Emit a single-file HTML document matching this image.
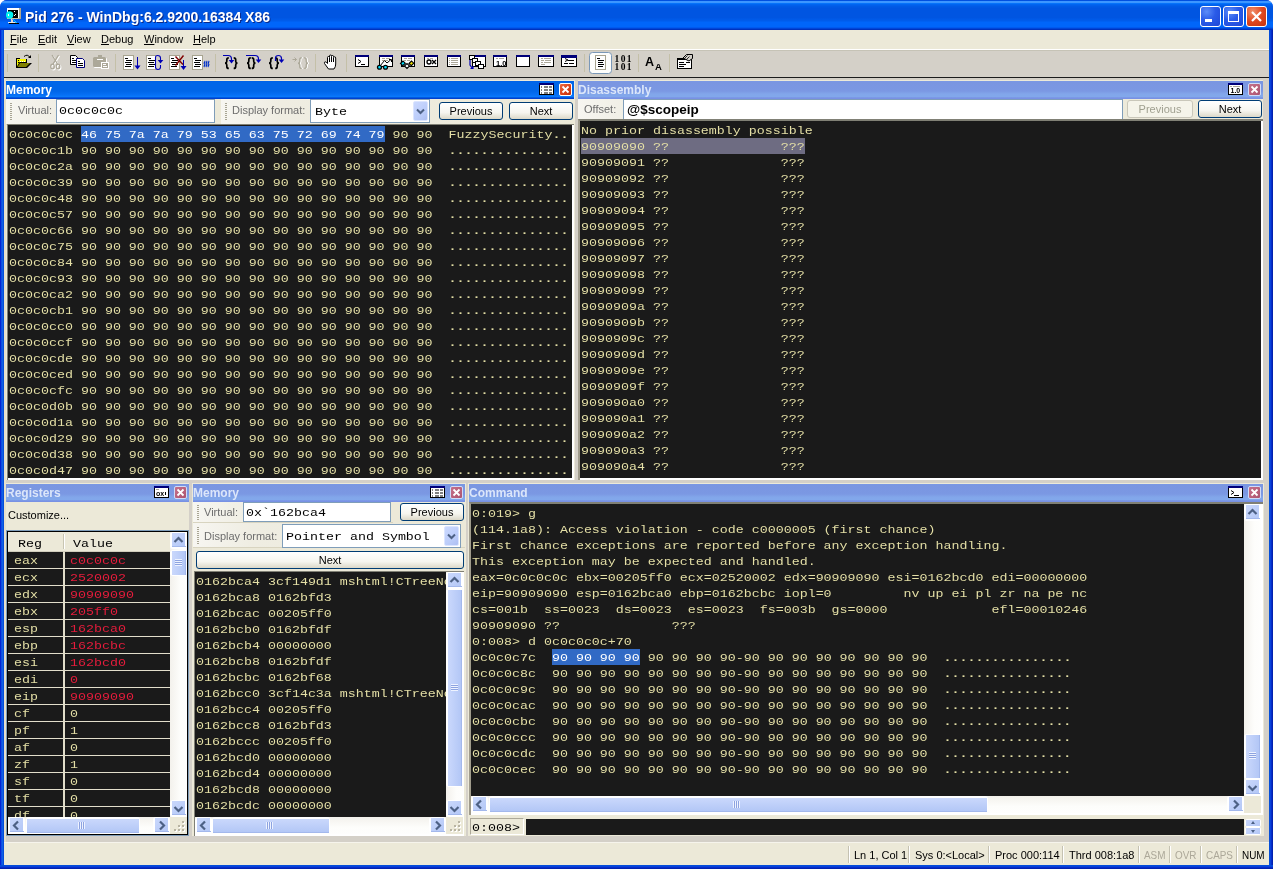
<!DOCTYPE html>
<html><head><meta charset="utf-8"><title>WinDbg</title><style>
html,body{margin:0;padding:0;background:#fff;}
body{width:1273px;height:869px;overflow:hidden;position:relative;font-family:"Liberation Sans",sans-serif;font-size:11px;color:#000;}
div,span,i{box-sizing:border-box;}
.abs{position:absolute;}
#win{position:absolute;left:0;top:0;width:1273px;height:869px;background:#0831d9;will-change:transform;border-radius:7px 7px 0 0;overflow:hidden;}
#bl{position:absolute;left:0;top:30px;width:4px;height:839px;background:linear-gradient(90deg,#0019cf 0,#0831d9 1px,#166aee 2px,#0855dd 3px,#0046d5 4px);}
#br{position:absolute;left:1269px;top:30px;width:4px;height:839px;background:linear-gradient(90deg,#0046d5 0,#0855dd 1px,#0831d9 2px,#001ea0 4px);}
#bb{position:absolute;left:0;top:865px;width:1273px;height:4px;background:linear-gradient(#0046d5 0,#0855dd 1px,#0831d9 2px,#001ea0 4px);}
#title{position:absolute;left:0;top:0;width:1273px;height:30px;background:linear-gradient(#0050e0 0,#0050e0 .6px,#3c96ff 1.4px,#3c96ff 2.6px,#0573fa 3.5px,#0064f0 4.5px,#005ae6 6.5px,#0055e1 8.5px,#0055e1 17.5px,#005ceb 20.5px,#0066fa 22.5px,#0066fa 26.5px,#005af0 27.5px,#0046d7 28.5px,#0032be 29.5px,#0032be 30px);}
#title .t{position:absolute;left:25px;top:9px;font-weight:bold;font-size:14px;line-height:16px;color:#fff;text-shadow:1px 1px 0 #0a2a8a;white-space:nowrap;}
.wb{position:absolute;top:6px;width:21px;height:21px;border:1px solid #fff;border-radius:3px;background:radial-gradient(circle at 30% 25%,#5c8df8 0,#2a5be8 45%,#1f47d6 100%);}
.wb.x{background:radial-gradient(circle at 30% 25%,#f0906c 0,#e0481f 50%,#c8320c 100%);}
#client{position:absolute;left:4px;top:30px;width:1265px;height:835px;background:#d4d0c8;}
#menu{position:absolute;left:0;top:0;width:1265px;height:19px;background:#ece9d8;}
#menu span{position:absolute;top:3px;font-size:11px;white-space:nowrap;}
#menu u{text-decoration:underline;}
#tb{position:absolute;left:0;top:19px;width:1265px;height:29px;background:#d4d0c8;border-top:1px solid #fff;border-bottom:1px solid #1c1c1c;box-shadow:inset 0 1px 0 #c6c3b6;}
.mono{font-family:"Liberation Mono",monospace;font-size:11.7px;line-height:16px;white-space:pre;color:#e4dfa6;}
.dark{position:absolute;background:#1a1a1a;overflow:hidden;}
.row{position:absolute;left:0;height:16px;transform:scaleX(1.1394);transform-origin:0 0;}
.sq{transform:scaleX(1.1394);transform-origin:0 0;}
.mono b{font-weight:bold;}
.mono b{font-weight:bold;}
.hl{position:absolute;height:16px;}
.ptitle{position:absolute;height:18px;color:#fff;font-weight:bold;font-size:12px;white-space:nowrap;}
.ptitle.act{background:linear-gradient(#0060e6 0,#0066e8 1.5px,#0066e8 10px,#0670f5 14px,#0a78fa 15.5px,#005ae0 16.5px,#0040d0 17.5px,#0040d0 18px);}
.ptitle.ina{background:linear-gradient(#7a98e4 0,#7a96e1 1.5px,#7b98e3 10px,#82a6ea 13px,#82a8eb 15.5px,#7891e4 17px,#7891e4 18px);color:#dbe6fa;}
.ptitle b{position:absolute;left:0px;top:2px;line-height:14px;}
.pclose{position:absolute;top:2px;width:13px;height:13px;border:1px solid #fff;border-radius:2px;background:linear-gradient(135deg,#ea6a42 0,#d8401a 60%,#c03410 100%);}
.ina .pclose{background:linear-gradient(135deg,#c4708a 0,#b8607a 60%,#aa5470 100%);border-color:#d0dcf8;}
.lbl{position:absolute;color:#6d6d6d;font-size:11px;white-space:nowrap;}
.inp{position:absolute;background:#fff;border:1px solid #7f9db9;}
.btn{position:absolute;border:1px solid #003c74;border-radius:3px;background:linear-gradient(#fff 0,#f6f5ef 60%,#dcd8c8 100%);text-align:center;font-size:11px;white-space:nowrap;}
.btn.dis{border-color:#c9c7ba;color:#a0a090;background:#f5f4ea;}
.bar{position:absolute;background:#ece9d8;}
.tbar{position:absolute;background:linear-gradient(90deg,#f7f6f1 0,#efede2 60px,#ece9d8 100%);border-bottom:1px solid #d8d4c0;}
.grip{position:absolute;width:2px;background:repeating-linear-gradient(#a8a594 0,#a8a594 1px,transparent 1px,transparent 2px);}
.cba{position:absolute;width:15px;background:linear-gradient(135deg,#cbd9ff 0,#bccdfa 60%,#aebff2 100%);border:1px solid #dbe5ff;border-radius:2px;}

.sbt.v{position:absolute;background:linear-gradient(90deg,#f3f1ec 0,#fdfdfb 60%,#fefefd 100%);}
.sbt.h{position:absolute;background:linear-gradient(#f3f1ec 0,#fdfdfb 60%,#fefefd 100%);}
.sbb,.sbth{position:absolute;border-radius:3px;background:linear-gradient(#a3b8ec,#a3b8ec) 2px calc(100% - 2px)/calc(100% - 3px) 1px no-repeat,linear-gradient(135deg,#cad8fc,#b3c7f6) 2px 1px/calc(100% - 4px) calc(100% - 3px) no-repeat,#fff;}
.sbth.vth{background:linear-gradient(#a3b8ec,#a3b8ec) calc(100% - 1px) 1px/1px calc(100% - 2px) no-repeat,linear-gradient(90deg,#cad8fc,#b3c7f6) 2px 1px/calc(100% - 4px) calc(100% - 2px) no-repeat,#fff;}
.sbth.hth{background:linear-gradient(#a3b8ec,#a3b8ec) 1px calc(100% - 1px)/calc(100% - 2px) 1px no-repeat,linear-gradient(#cad8fc,#b3c7f6) 1px 2px/calc(100% - 2px) calc(100% - 4px) no-repeat,#fff;}
.sbb.sm{background:linear-gradient(135deg,#cad8fc,#b3c7f6) 1px 1px/calc(100% - 2px) calc(100% - 2px) no-repeat,#fff;border-radius:2px;}
.gripv{position:absolute;left:5px;width:7px;height:7px;background:repeating-linear-gradient(#eef3ff 0,#eef3ff 1px,#8da3e0 1px,#8da3e0 2px);}
.griph{position:absolute;top:5px;width:7px;height:7px;background:repeating-linear-gradient(90deg,#eef3ff 0,#eef3ff 1px,#8da3e0 1px,#8da3e0 2px);}
.tri{position:absolute;left:6px;width:0;height:0;border-left:2.5px solid transparent;border-right:2.5px solid transparent;}
.tri.up{top:2px;border-bottom:3px solid #4d6185;}
.tri.dn{top:3px;border-top:3px solid #4d6185;}
</style></head><body>
<div id="win">
<div id="title"><div class="t">Pid 276 - WinDbg:6.2.9200.16384 X86</div>
<svg style="position:absolute;left:6px;top:8px" width="16" height="16" viewBox="0 0 16 16" shape-rendering="crispEdges"><rect x="1" y="0" width="12" height="11" fill="#fff"/><rect x="13" y="0" width="2" height="11" fill="#b0a890"/><rect x="1" y="10" width="12" height="1" fill="#c8c0a8"/><rect x="2" y="2" width="10" height="8" fill="#000"/><rect x="8" y="3" width="1" height="1" fill="#fff"/><rect x="9" y="6" width="1" height="1" fill="#fff"/><rect x="8" y="7" width="1" height="1" fill="#fff"/><rect x="5" y="11" width="2" height="3" fill="#d8d8d8"/><rect x="2" y="14" width="9" height="1" fill="#e8e8e8"/><rect x="3" y="15" width="10" height="1" fill="#000"/><path d="M6 11 L8 11 L12 15 L10 15 Z" fill="#0040ff" shape-rendering="auto"/><path d="M7 11.3 L11 15" stroke="#00e8ff" stroke-width="1" shape-rendering="auto"/><circle cx="3.6" cy="7" r="3.7" fill="#00f0f0" shape-rendering="auto"/><rect x="2" y="6" width="1" height="2" fill="#fff"/></svg>
<div class="wb" style="left:1200px"><i class="abs" style="left:4px;top:12px;width:7px;height:3px;background:#fff"></i></div>
<div class="wb" style="left:1223px"><i class="abs" style="left:4px;top:4px;width:11px;height:11px;border:1px solid #fff;border-top-width:3px"></i></div>
<div class="wb x" style="left:1246px"><svg class="abs" style="left:0;top:0" width="19" height="19"><path d="M5 5 L14 14 M14 5 L5 14" stroke="#fff" stroke-width="2.2"/></svg></div>
</div>
<div id="bl"></div><div id="br"></div><div id="bb"></div>
<div id="client">
<div id="menu">
<span style="left:6px"><u>F</u>ile</span>
<span style="left:34px"><u>E</u>dit</span>
<span style="left:63px"><u>V</u>iew</span>
<span style="left:97px"><u>D</u>ebug</span>
<span style="left:140px"><u>W</u>indow</span>
<span style="left:189px"><u>H</u>elp</span>
</div>
<div id="tb"></div>
<svg style="position:absolute;left:0;top:21px" width="1265" height="27" viewBox="4 51 1265 27"><rect x="7" y="54" width="1" height="18" fill="#c4c0a8" /><rect x="38" y="54" width="1" height="18" fill="#c4c0a8" /><rect x="115" y="54" width="1" height="18" fill="#c4c0a8" /><rect x="215" y="54" width="1" height="18" fill="#c4c0a8" /><rect x="315" y="54" width="1" height="18" fill="#c4c0a8" /><rect x="346" y="54" width="1" height="18" fill="#c4c0a8" /><rect x="584" y="54" width="1" height="18" fill="#c4c0a8" /><rect x="638" y="54" width="1" height="18" fill="#c4c0a8" /><rect x="669" y="54" width="1" height="18" fill="#c4c0a8" /><path d="M16 58 H20 V59 H27 V63 H32 L27 68 H16 Z" fill="#000" stroke="none" stroke-width="1" /><rect x="17" y="59" width="9" height="3" fill="#f8f800" /><path d="M17 62 V66.5 L19.5 62 Z" fill="#f8f800" stroke="none" stroke-width="1" /><rect x="18" y="60" width="1" height="1" fill="#000" /><rect x="18" y="62" width="1" height="1" fill="#000" /><rect x="20" y="61" width="1" height="1" fill="#fff" /><rect x="22" y="61" width="1" height="1" fill="#fff" /><rect x="24" y="61" width="1" height="1" fill="#fff" /><path d="M20 63 H30 L26 67 H17.5 Z" fill="#808000" stroke="none" stroke-width="1" /><path d="M24 56.5 Q27.5 53.5 30 57.5" fill="none" stroke="#000" stroke-width="1" /><path d="M28 58 H31 V55 Z" fill="#000" stroke="none" stroke-width="1" /><g transform="translate(1,1)" fill="none" stroke="#fff" stroke-width="1.2"><path d="M52 55 L57.5 64 M58.5 55 L53 64"/><ellipse cx="52.5" cy="66.5" rx="1.8" ry="2.3"/><ellipse cx="58" cy="66.5" rx="1.8" ry="2.3"/></g><g transform="translate(0,0)" fill="none" stroke="#aca899" stroke-width="1.2"><path d="M52 55 L57.5 64 M58.5 55 L53 64"/><ellipse cx="52.5" cy="66.5" rx="1.8" ry="2.3"/><ellipse cx="58" cy="66.5" rx="1.8" ry="2.3"/></g><path d="M70.5 55.5 H75.5 L77.5 57.5 V64.5 H70.5 Z" fill="#fff" stroke="#000" stroke-width="1" /><rect x="72" y="58" width="2" height="1" fill="#000" /><rect x="72" y="60" width="4" height="1" fill="#000" /><rect x="72" y="62" width="4" height="1" fill="#000" /><path d="M76.5 58.5 H82.5 L84.5 60.5 V67.5 H76.5 Z" fill="#fff" stroke="#00007b" stroke-width="1" /><rect x="78" y="61" width="2" height="1" fill="#000" /><rect x="78" y="63" width="5" height="1" fill="#000" /><rect x="78" y="65" width="5" height="1" fill="#000" /><rect x="94" y="58" width="13" height="10" fill="#fff" rx="1"/><rect x="93" y="57" width="13" height="10" fill="#aca899" rx="1.5"/><rect x="98" y="55" width="4" height="2" fill="#aca899" /><rect x="97" y="59" width="6" height="1" fill="#fff" /><rect x="101" y="62" width="8" height="7" fill="#fff" /><rect x="102" y="63" width="6" height="5" fill="#aca899" /><rect x="103" y="64" width="3" height="1" fill="#fff" /><rect x="103" y="66" width="4" height="1" fill="#fff" /><rect x="123" y="55" width="11" height="15" fill="#fff" /><rect x="123.5" y="55.5" width="10" height="14" fill="none" stroke="#a8a490"/><rect x="125" y="58" width="3" height="1" fill="#000" /><rect x="126" y="60" width="6" height="1" fill="#000" /><rect x="125" y="62" width="6" height="1" fill="#000" /><rect x="126" y="64" width="6" height="1" fill="#000" /><rect x="125" y="66" width="6" height="1" fill="#000" /><rect x="137" y="57" width="1" height="11" fill="#0000b4" /><path d="M134.5 65.5 H140.5 L137.5 69.5 Z" fill="#0000b4" stroke="none" stroke-width="1" /><rect x="146" y="55" width="11" height="15" fill="#fff" /><rect x="146.5" y="55.5" width="10" height="14" fill="none" stroke="#a8a490"/><rect x="148" y="58" width="3" height="1" fill="#000" /><rect x="149" y="60" width="6" height="1" fill="#000" /><rect x="148" y="62" width="6" height="1" fill="#000" /><rect x="149" y="64" width="6" height="1" fill="#000" /><rect x="148" y="66" width="6" height="1" fill="#000" /><rect x="156" y="55" width="2" height="15" fill="#d4d0c8" /><path d="M155.5 57.5 Q155.5 55.5 157.5 55.5 Q160.5 55.5 160.5 58 V60 M155.5 57.5 V67 Q155.5 69.5 158 69.5 Q160.5 69.5 160.5 67 V65" fill="none" stroke="#0000b4" stroke-width="1.1" /><path d="M157.7 60 H163.3 L160.5 63.5 Z" fill="#0000b4" stroke="none" stroke-width="1" /><rect x="169" y="55" width="11" height="15" fill="#fff" /><rect x="169.5" y="55.5" width="10" height="14" fill="none" stroke="#a8a490"/><rect x="171" y="58" width="3" height="1" fill="#000" /><rect x="172" y="60" width="6" height="1" fill="#000" /><rect x="171" y="62" width="6" height="1" fill="#000" /><rect x="172" y="64" width="6" height="1" fill="#000" /><rect x="171" y="66" width="6" height="1" fill="#000" /><rect x="183" y="60" width="1" height="8" fill="#0000b4" /><path d="M180.5 66 H186.5 L183.5 70 Z" fill="#0000b4" stroke="none" stroke-width="1" /><path d="M175.5 56.5 L183 64.5 M183.5 55.5 L175.5 65.5" fill="none" stroke="#800000" stroke-width="1.4" /><rect x="192" y="55" width="11" height="15" fill="#fff" /><rect x="192.5" y="55.5" width="10" height="14" fill="none" stroke="#a8a490"/><rect x="194" y="58" width="3" height="1" fill="#000" /><rect x="195" y="60" width="6" height="1" fill="#000" /><rect x="194" y="62" width="6" height="1" fill="#000" /><rect x="195" y="64" width="6" height="1" fill="#000" /><rect x="194" y="66" width="6" height="1" fill="#000" /><path d="M204.5 61 q.8 .75 0 1.5 q-.8 .75 0 1.5 q.8 .75 0 1.5 q-.8 .75 0 1.5" fill="none" stroke="#0030c8" stroke-width="1.1" /><path d="M206.5 61 q.8 .75 0 1.5 q-.8 .75 0 1.5 q.8 .75 0 1.5 q-.8 .75 0 1.5" fill="none" stroke="#0030c8" stroke-width="1.1" /><path d="M208.5 61 q.8 .75 0 1.5 q-.8 .75 0 1.5 q.8 .75 0 1.5 q-.8 .75 0 1.5" fill="none" stroke="#0030c8" stroke-width="1.1" /><path d="M228.8 57.8 Q226.8 57.8 226.8 59.8 V61.2 Q226.8 63 225.1 63.2 Q226.8 63.4 226.8 65 V66.4 Q226.8 68.4 228.8 68.4" fill="none" stroke="#000" stroke-width="1.7" /><path d="M233.7 57.8 Q235.7 57.8 235.7 59.8 V61.2 Q235.7 63 237.4 63.2 Q235.7 63.4 235.7 65 V66.4 Q235.7 68.4 233.7 68.4" fill="none" stroke="#000" stroke-width="1.7" /><path d="M223 55.5 H228 Q231.5 55.5 231.5 59 V61" fill="none" stroke="#0000b4" stroke-width="1.2" /><path d="M228.7 60 H234.3 L231.5 63.5 Z" fill="#0000b4" stroke="none" stroke-width="1" /><path d="M250.8 57.8 Q248.8 57.8 248.8 59.8 V61.2 Q248.8 63 247.1 63.2 Q248.8 63.4 248.8 65 V66.4 Q248.8 68.4 250.8 68.4" fill="none" stroke="#000" stroke-width="1.7" /><path d="M251.7 57.8 Q253.7 57.8 253.7 59.8 V61.2 Q253.7 63 255.4 63.2 Q253.7 63.4 253.7 65 V66.4 Q253.7 68.4 251.7 68.4" fill="none" stroke="#000" stroke-width="1.7" /><path d="M246 55.5 H255 Q258.5 55.5 258.5 59 V60" fill="none" stroke="#0000b4" stroke-width="1.2" /><path d="M255.7 59.5 H261.3 L258.5 63 Z" fill="#0000b4" stroke="none" stroke-width="1" /><path d="M272.8 57.8 Q270.8 57.8 270.8 59.8 V61.2 Q270.8 63 269.1 63.2 Q270.8 63.4 270.8 65 V66.4 Q270.8 68.4 272.8 68.4" fill="none" stroke="#000" stroke-width="1.7" /><path d="M275.2 57.8 Q277.2 57.8 277.2 59.8 V61.2 Q277.2 63 278.9 63.2 Q277.2 63.4 277.2 65 V66.4 Q277.2 68.4 275.2 68.4" fill="none" stroke="#000" stroke-width="1.7" /><path d="M275.5 61 V58 Q275.5 55.5 278.5 55.5 Q281.5 55.5 281.5 58.5 V60" fill="none" stroke="#0000b4" stroke-width="1.2" /><path d="M278.7 59.5 H284.3 L281.5 63 Z" fill="#0000b4" stroke="none" stroke-width="1" /><path d="M302.8 57.8 Q300.8 57.8 300.8 59.8 V61.2 Q300.8 63 299.1 63.2 Q300.8 63.4 300.8 65 V66.4 Q300.8 68.4 302.8 68.4" fill="none" stroke="#fff" stroke-width="1.4" /><path d="M305.2 57.8 Q307.2 57.8 307.2 59.8 V61.2 Q307.2 63 308.9 63.2 Q307.2 63.4 307.2 65 V66.4 Q307.2 68.4 305.2 68.4" fill="none" stroke="#fff" stroke-width="1.4" /><path d="M301.8 57.8 Q299.8 57.8 299.8 59.8 V61.2 Q299.8 63 298.1 63.2 Q299.8 63.4 299.8 65 V66.4 Q299.8 68.4 301.8 68.4" fill="none" stroke="#aca899" stroke-width="1.4" /><path d="M304.2 57.8 Q306.2 57.8 306.2 59.8 V61.2 Q306.2 63 307.9 63.2 Q306.2 63.4 306.2 65 V66.4 Q306.2 68.4 304.2 68.4" fill="none" stroke="#aca899" stroke-width="1.4" /><path d="M292.5 59.5 H296.5 M294.5 57.5 L296.5 59.5 L294.5 61.5" fill="none" stroke="#aca899" stroke-width="1" /><path d="M327.5 62 V57.5 Q327.5 56.5 328.5 56.5 Q329.5 56.5 329.5 57.5 V56 Q329.5 55 330.5 55 Q331.5 55 331.5 56 V56.5 Q331.5 55.5 332.5 55.5 Q333.5 55.5 333.5 56.5 V57.5 Q333.5 56.8 334.5 56.8 Q335.7 56.8 335.7 58 V64 Q335.7 67 334 69 H328.5 L324.5 63.5 Q324 62 325.2 61.8 Q326.3 61.8 327.5 63.5 Z" fill="#fff" stroke="#000" stroke-width="1" /><line x1="329.5" y1="58" x2="329.5" y2="62" stroke="#000" stroke-width="1"/><line x1="331.5" y1="57" x2="331.5" y2="62" stroke="#000" stroke-width="1"/><line x1="333.5" y1="58" x2="333.5" y2="62" stroke="#000" stroke-width="1"/><rect x="355" y="55" width="14" height="12" fill="#000" /><rect x="356" y="57" width="12" height="9" fill="#fff" /><rect x="355" y="55" width="14" height="2" fill="#00007b" /><path d="M358 59.5 L361 61.5 L358 63.5" fill="none" stroke="#000" stroke-width="1" /><rect x="361" y="64" width="4" height="1" fill="#000" /><rect x="379" y="55" width="14" height="12" fill="#000" /><rect x="380" y="57" width="12" height="9" fill="#fff" /><rect x="379" y="55" width="14" height="2" fill="#00007b" /><rect x="382" y="58" width="3" height="1" fill="#aca899" /><rect x="386" y="58" width="4" height="1" fill="#aca899" /><rect x="382" y="60" width="2" height="1" fill="#aca899" /><rect x="385" y="60" width="3" height="1" fill="#aca899" /><path d="M380 66 L384.5 60.5 L387 63 L391 59.5 M389 59.5 H391.5 V62" fill="none" stroke="#000" stroke-width="1" /><ellipse cx="379.5" cy="67.3" rx="2" ry="1.9" fill="#00e0ff" stroke="#000" stroke-width="1.3"/><ellipse cx="385.5" cy="67.3" rx="2" ry="1.9" fill="#00e0ff" stroke="#000" stroke-width="1.3"/><rect x="381" y="66" width="3" height="1" fill="#000" /><rect x="401" y="55" width="14" height="12" fill="#000" /><rect x="402" y="57" width="12" height="9" fill="#fff" /><rect x="401" y="55" width="14" height="2" fill="#00007b" /><rect x="404" y="58" width="3" height="1" fill="#aca899" /><rect x="408" y="58" width="4" height="1" fill="#aca899" /><rect x="404" y="60" width="2" height="1" fill="#aca899" /><rect x="407" y="60" width="3" height="1" fill="#aca899" /><path d="M400.5 63.5 L403 61 L405.3 63.2 L402.8 65.7 Z" fill="#00e0ff" stroke="#000" stroke-width="1.1" /><path d="M404.5 66 L407 63.5 L409.5 66 L407 68.5 Z" fill="#fff" stroke="#000" stroke-width="1.1" /><path d="M409 63.5 L411.5 61 L413.8 63.2 L411.3 65.7 Z" fill="#f0e000" stroke="#000" stroke-width="1.1" /><rect x="424" y="55" width="14" height="12" fill="#000" /><rect x="425" y="57" width="12" height="9" fill="#fff" /><rect x="424" y="55" width="14" height="2" fill="#00007b" /><ellipse cx="429" cy="62" rx="2" ry="2" fill="none" stroke="#000" stroke-width="1.3"/><path d="M432 60 L436 64 M436 60 L432 64" fill="none" stroke="#000" stroke-width="1.3" /><rect x="427" y="58" width="2" height="1" fill="#aca899" /><rect x="430" y="58" width="3" height="1" fill="#aca899" /><rect x="447" y="55" width="14" height="12" fill="#000" /><rect x="448" y="57" width="12" height="9" fill="#fff" /><rect x="447" y="55" width="14" height="2" fill="#00007b" /><rect x="449" y="58" width="1" height="1" fill="#aca899" /><rect x="451" y="58" width="7" height="1" fill="#aca899" /><rect x="449" y="60" width="1" height="1" fill="#aca899" /><rect x="451" y="60" width="7" height="1" fill="#aca899" /><rect x="449" y="62" width="1" height="1" fill="#aca899" /><rect x="451" y="62" width="7" height="1" fill="#aca899" /><rect x="449" y="64" width="1" height="1" fill="#aca899" /><rect x="451" y="64" width="7" height="1" fill="#aca899" /><rect x="472" y="55" width="14" height="12" fill="#000" /><rect x="473" y="57" width="12" height="9" fill="#fff" /><rect x="472" y="55" width="14" height="2" fill="#00007b" /><path d="M470 57 V65 L472.5 68.5 M470.5 68.5 H473 V66" fill="none" stroke="#0000b4" stroke-width="1.2" /><rect x="469" y="55" width="6" height="5" fill="#000" /><rect x="470" y="56" width="4" height="3" fill="#fff" /><rect x="472" y="58" width="6" height="5" fill="#000" /><rect x="473" y="59" width="4" height="3" fill="#fff" /><rect x="475" y="61" width="6" height="5" fill="#000" /><rect x="476" y="62" width="4" height="3" fill="#fff" /><rect x="478" y="64" width="6" height="5" fill="#000" /><rect x="479" y="65" width="4" height="3" fill="#fff" /><rect x="493" y="55" width="14" height="12" fill="#000" /><rect x="494" y="57" width="12" height="9" fill="#fff" /><rect x="493" y="55" width="14" height="2" fill="#00007b" /><rect x="496" y="58" width="2" height="1" fill="#aca899" /><rect x="499" y="58" width="5" height="1" fill="#aca899" /><text x="496" y="65.5" font-family="Liberation Sans" font-weight="bold" font-size="7.5" fill="#000">1.0</text><rect x="516" y="55" width="14" height="12" fill="#000" /><rect x="517" y="57" width="12" height="9" fill="#fff" /><rect x="516" y="55" width="14" height="2" fill="#00007b" /><rect x="538" y="55" width="16" height="12" fill="#000" /><rect x="539" y="57" width="14" height="9" fill="#fff" /><rect x="538" y="55" width="16" height="2" fill="#00007b" /><rect x="541" y="58" width="2" height="1" fill="#aca899" /><rect x="544" y="58" width="7" height="1" fill="#aca899" /><rect x="541" y="60" width="3" height="1" fill="#aca899" /><rect x="545" y="60" width="6" height="1" fill="#aca899" /><rect x="541" y="62" width="2" height="1" fill="#aca899" /><rect x="544" y="62" width="7" height="1" fill="#aca899" /><rect x="541" y="64" width="4" height="1" fill="#aca899" /><rect x="561" y="55" width="16" height="12" fill="#000" /><rect x="562" y="57" width="14" height="9" fill="#fff" /><rect x="561" y="55" width="16" height="2" fill="#00007b" /><path d="M565 58.5 L568 60 L565 61.5" fill="none" stroke="#000" stroke-width="1" /><rect x="568" y="60" width="6" height="1" fill="#000" /><rect x="564" y="63" width="4" height="1" fill="#000" /><rect x="569" y="63" width="5" height="1" fill="#000" /><rect x="561" y="55" width="16" height="3" fill="#00007b" /><rect x="589.5" y="52.5" width="22" height="21" fill="#fdfdfb" rx="3" stroke="#7a98b8"/><rect x="595" y="55" width="11" height="15" fill="#fff" /><rect x="595.5" y="55.5" width="10" height="14" fill="none" stroke="#a8a490"/><rect x="597" y="58" width="3" height="1" fill="#000" /><rect x="598" y="60" width="6" height="1" fill="#000" /><rect x="598" y="62" width="5" height="1" fill="#000" /><rect x="598" y="64" width="6" height="1" fill="#000" /><rect x="598" y="66" width="5" height="1" fill="#000" /><text x="614.5" y="61.5" font-family="Liberation Serif" font-weight="bold" font-size="9.5" fill="#000" textLength="17" lengthAdjust="spacing">101</text><text x="614.5" y="69.5" font-family="Liberation Serif" font-weight="bold" font-size="9.5" fill="#000" textLength="17" lengthAdjust="spacing">101</text><text x="645" y="66" font-family="Liberation Sans" font-weight="bold" font-size="12.5" fill="#000">A</text><text x="655" y="69.5" font-family="Liberation Sans" font-weight="bold" font-size="9.5" fill="#000">A</text><rect x="677" y="58" width="15" height="11" fill="#000" /><rect x="678" y="60" width="13" height="8" fill="#fff" /><rect x="679" y="62" width="5" height="1" fill="#000" /><rect x="679" y="64" width="7" height="1" fill="#000" /><rect x="679" y="66" width="5" height="1" fill="#000" /><rect x="686" y="62" width="4" height="1" fill="#000" /><path d="M683 58 L686.5 54.5 H692.5 V58.5 L689 61 Z" fill="#d4d0c8" stroke="#000" stroke-width="1" /><path d="M684.5 58.5 L687.5 55.5 M686.5 59.5 L689.5 56.5" fill="none" stroke="#000" stroke-width="0.8" /></svg>
<div class="abs" style="left:0px;top:48px;width:2px;height:764px;background:#e6dfcc"></div>
<div class="abs" style="left:2px;top:50px;width:569px;height:400px;background:#ece9d8"></div>
<div class="ptitle act" style="left:2px;top:51px;width:568px;"><b>Memory</b><div class="pclose" style="left:553px"><svg class="abs" style="left:0;top:0" width="11" height="11"><path d="M2.5 2.5 L8.5 8.5 M8.5 2.5 L2.5 8.5" stroke="#fff" stroke-width="1.8"/></svg></div><svg class="abs" style="left:533px;top:2px" width="15" height="12" viewBox="0 0 15 12" shape-rendering="crispEdges"><rect width="15" height="12" fill="#000"/><rect x="1" y="2" width="13" height="9" fill="#fff"/><rect width="15" height="2" fill="#00007b"/><rect x="2" y="3" width="1" height="2" fill="#808080"/><rect x="5" y="3" width="4" height="2" fill="#808080"/><rect x="10" y="3" width="3" height="2" fill="#808080"/><rect x="2" y="6" width="1" height="2" fill="#808080"/><rect x="5" y="6" width="4" height="2" fill="#808080"/><rect x="10" y="6" width="3" height="2" fill="#808080"/><rect x="2" y="9" width="1" height="2" fill="#808080"/><rect x="5" y="9" width="4" height="2" fill="#808080"/><rect x="10" y="9" width="3" height="2" fill="#808080"/></svg></div>
<div class="tbar" style="left:2px;top:69px;width:214px;height:26px;"></div>
<div class="tbar" style="left:217px;top:69px;width:352px;height:26px;"></div>
<div class="grip" style="left:6px;top:73px;height:17px"></div>
<div class="grip" style="left:221px;top:73px;height:17px"></div>
<div class="lbl" style="left:14px;top:74px;">Virtual:</div>
<div class="inp" style="left:52px;top:69px;width:159px;height:24px;"><span class="mono sq" style="color:#000;position:absolute;left:2px;top:3px;">0c0c0c0c</span></div>
<div class="lbl" style="left:228px;top:74px;">Display format:</div>
<div class="inp" style="left:306px;top:69px;width:120px;height:24px;"><span class="mono sq" style="color:#000;position:absolute;left:4px;top:4px;">Byte</span></div>
<div class="cba" style="left:409px;top:71px;height:20px"><svg class="abs" style="left:2px;top:6px" width="9" height="7"><path d="M1 1.5 L4.5 5 L8 1.5" fill="none" stroke="#4d6185" stroke-width="2"/></svg></div>
<div class="btn" style="left:435px;top:72px;width:64px;height:18px;line-height:16px;">Previous</div>
<div class="btn" style="left:505px;top:72px;width:64px;height:18px;line-height:16px;">Next</div>
<div class="abs" style="left:3px;top:94px;width:567px;height:356px;background:#fff;border-left:1px solid #808075;border-top:1px solid #808075"></div>
<div class="dark" style="left:4px;top:95px;width:564px;height:353px;">
<div class="hl" style="left:73px;top:1px;width:304px;background:#316ac5"></div>
<div class="row mono" style="left:1px;top:2px;">0c0c0c0c <span style="color:#fff">46 75 7a 7a 79 53 65 63 75 72 69 74 79</span> 90 90  FuzzySecurity<b>..</b></div>
<div class="row mono" style="left:1px;top:18px;">0c0c0c1b 90 90 90 90 90 90 90 90 90 90 90 90 90 90 90  <b>...............</b></div>
<div class="row mono" style="left:1px;top:34px;">0c0c0c2a 90 90 90 90 90 90 90 90 90 90 90 90 90 90 90  <b>...............</b></div>
<div class="row mono" style="left:1px;top:50px;">0c0c0c39 90 90 90 90 90 90 90 90 90 90 90 90 90 90 90  <b>...............</b></div>
<div class="row mono" style="left:1px;top:66px;">0c0c0c48 90 90 90 90 90 90 90 90 90 90 90 90 90 90 90  <b>...............</b></div>
<div class="row mono" style="left:1px;top:82px;">0c0c0c57 90 90 90 90 90 90 90 90 90 90 90 90 90 90 90  <b>...............</b></div>
<div class="row mono" style="left:1px;top:98px;">0c0c0c66 90 90 90 90 90 90 90 90 90 90 90 90 90 90 90  <b>...............</b></div>
<div class="row mono" style="left:1px;top:114px;">0c0c0c75 90 90 90 90 90 90 90 90 90 90 90 90 90 90 90  <b>...............</b></div>
<div class="row mono" style="left:1px;top:130px;">0c0c0c84 90 90 90 90 90 90 90 90 90 90 90 90 90 90 90  <b>...............</b></div>
<div class="row mono" style="left:1px;top:146px;">0c0c0c93 90 90 90 90 90 90 90 90 90 90 90 90 90 90 90  <b>...............</b></div>
<div class="row mono" style="left:1px;top:162px;">0c0c0ca2 90 90 90 90 90 90 90 90 90 90 90 90 90 90 90  <b>...............</b></div>
<div class="row mono" style="left:1px;top:178px;">0c0c0cb1 90 90 90 90 90 90 90 90 90 90 90 90 90 90 90  <b>...............</b></div>
<div class="row mono" style="left:1px;top:194px;">0c0c0cc0 90 90 90 90 90 90 90 90 90 90 90 90 90 90 90  <b>...............</b></div>
<div class="row mono" style="left:1px;top:210px;">0c0c0ccf 90 90 90 90 90 90 90 90 90 90 90 90 90 90 90  <b>...............</b></div>
<div class="row mono" style="left:1px;top:226px;">0c0c0cde 90 90 90 90 90 90 90 90 90 90 90 90 90 90 90  <b>...............</b></div>
<div class="row mono" style="left:1px;top:242px;">0c0c0ced 90 90 90 90 90 90 90 90 90 90 90 90 90 90 90  <b>...............</b></div>
<div class="row mono" style="left:1px;top:258px;">0c0c0cfc 90 90 90 90 90 90 90 90 90 90 90 90 90 90 90  <b>...............</b></div>
<div class="row mono" style="left:1px;top:274px;">0c0c0d0b 90 90 90 90 90 90 90 90 90 90 90 90 90 90 90  <b>...............</b></div>
<div class="row mono" style="left:1px;top:290px;">0c0c0d1a 90 90 90 90 90 90 90 90 90 90 90 90 90 90 90  <b>...............</b></div>
<div class="row mono" style="left:1px;top:306px;">0c0c0d29 90 90 90 90 90 90 90 90 90 90 90 90 90 90 90  <b>...............</b></div>
<div class="row mono" style="left:1px;top:322px;">0c0c0d38 90 90 90 90 90 90 90 90 90 90 90 90 90 90 90  <b>...............</b></div>
<div class="row mono" style="left:1px;top:338px;">0c0c0d47 90 90 90 90 90 90 90 90 90 90 90 90 90 90 90  <b>...............</b></div>
</div>
<div class="abs" style="left:574px;top:50px;width:685px;height:400px;background:#ece9d8"></div>
<div class="ptitle ina" style="left:574px;top:51px;width:685px;"><b>Disassembly</b><div class="pclose" style="left:670px"><svg class="abs" style="left:0;top:0" width="11" height="11"><path d="M2.5 2.5 L8.5 8.5 M8.5 2.5 L2.5 8.5" stroke="#fff" stroke-width="1.8"/></svg></div><svg class="abs" style="left:650px;top:2px" width="15" height="12" viewBox="0 0 15 12" shape-rendering="crispEdges"><rect width="15" height="12" fill="#000"/><rect x="1" y="2" width="13" height="9" fill="#fff"/><rect width="15" height="2" fill="#00007b"/><rect x="2" y="3" width="2" height="1" fill="#aca899"/><rect x="5" y="3" width="7" height="1" fill="#aca899"/><text x="2.5" y="10" font-family="Liberation Sans" font-weight="bold" font-size="7" fill="#000" shape-rendering="auto">1.0</text></svg></div>
<div class="tbar" style="left:574px;top:69px;width:685px;height:22px;"></div>
<div class="lbl" style="left:580px;top:73px;">Offset:</div>
<div class="inp" style="left:619px;top:69px;width:500px;height:21px;"><span style="position:absolute;left:3px;top:2px;font-weight:bold;font-size:13.5px;">@$scopeip</span></div>
<div class="btn dis" style="left:1123px;top:70px;width:66px;height:18px;line-height:16px;">Previous</div>
<div class="btn" style="left:1194px;top:70px;width:64px;height:18px;line-height:16px;">Next</div>
<div class="abs" style="left:574px;top:89px;width:685px;height:361px;background:#fff;border-left:2px solid #a09c8c;border-top:2px solid #808075"></div>
<div class="dark" style="left:576px;top:91px;width:681px;height:357px;">
<div class="hl" style="left:1px;top:17px;width:224px;background:#6e6c82"></div>
<div class="row mono" style="left:1px;top:2px;">No prior disassembly possible</div>
<div class="row mono" style="left:1px;top:18px;">90909090 ??              ???</div>
<div class="row mono" style="left:1px;top:34px;">90909091 ??              ???</div>
<div class="row mono" style="left:1px;top:50px;">90909092 ??              ???</div>
<div class="row mono" style="left:1px;top:66px;">90909093 ??              ???</div>
<div class="row mono" style="left:1px;top:82px;">90909094 ??              ???</div>
<div class="row mono" style="left:1px;top:98px;">90909095 ??              ???</div>
<div class="row mono" style="left:1px;top:114px;">90909096 ??              ???</div>
<div class="row mono" style="left:1px;top:130px;">90909097 ??              ???</div>
<div class="row mono" style="left:1px;top:146px;">90909098 ??              ???</div>
<div class="row mono" style="left:1px;top:162px;">90909099 ??              ???</div>
<div class="row mono" style="left:1px;top:178px;">9090909a ??              ???</div>
<div class="row mono" style="left:1px;top:194px;">9090909b ??              ???</div>
<div class="row mono" style="left:1px;top:210px;">9090909c ??              ???</div>
<div class="row mono" style="left:1px;top:226px;">9090909d ??              ???</div>
<div class="row mono" style="left:1px;top:242px;">9090909e ??              ???</div>
<div class="row mono" style="left:1px;top:258px;">9090909f ??              ???</div>
<div class="row mono" style="left:1px;top:274px;">909090a0 ??              ???</div>
<div class="row mono" style="left:1px;top:290px;">909090a1 ??              ???</div>
<div class="row mono" style="left:1px;top:306px;">909090a2 ??              ???</div>
<div class="row mono" style="left:1px;top:322px;">909090a3 ??              ???</div>
<div class="row mono" style="left:1px;top:338px;">909090a4 ??              ???</div>
</div>
<div class="abs" style="left:2px;top:453px;width:183px;height:353px;background:#ece9d8"></div>
<div class="ptitle ina" style="left:2px;top:454px;width:183px;"><b>Registers</b><div class="pclose" style="left:168px"><svg class="abs" style="left:0;top:0" width="11" height="11"><path d="M2.5 2.5 L8.5 8.5 M8.5 2.5 L2.5 8.5" stroke="#fff" stroke-width="1.8"/></svg></div><svg class="abs" style="left:148px;top:2px" width="15" height="12" viewBox="0 0 15 12" shape-rendering="crispEdges"><rect width="15" height="12" fill="#000"/><rect x="1" y="2" width="13" height="9" fill="#fff"/><rect width="15" height="2" fill="#00007b"/><rect x="2" y="3" width="3" height="1" fill="#aca899"/><text x="2" y="10" font-family="Liberation Sans" font-weight="bold" font-size="7" fill="#000" shape-rendering="auto">ox</text><rect x="11" y="6" width="1" height="3" fill="#000"/></svg></div>
<div class="abs" style="left:4px;top:479px;font-size:11px;">Customize...</div>
<div class="abs" style="left:2px;top:500px;width:183px;height:306px;border:1px solid #7f9db9;background:#000;"></div>
<div class="abs" style="left:4px;top:502px;width:162px;height:285px;background:#1a1a1a;overflow:hidden;">
<div class="abs" style="left:0;top:0;width:163px;height:20px;background:#ece9d8;border-bottom:1px solid #d0cdbc;"></div>
<div class="abs" style="left:55px;top:2px;width:2px;height:15px;background:#c8c5b2;border-right:1px solid #fff;"></div>
<div class="mono abs sq" style="left:10px;top:4px;color:#000;">Reg</div>
<div class="mono abs sq" style="left:65px;top:4px;color:#000;">Value</div>
<div class="abs" style="left:0;top:36px;width:163px;height:1px;background:#e2decb;"></div>
<div class="mono abs sq" style="left:6px;top:21px;">eax</div>
<div class="mono abs sq" style="left:62px;top:21px;color:#e61c3c;">c0c0c0c</div>
<div class="abs" style="left:0;top:53px;width:163px;height:1px;background:#e2decb;"></div>
<div class="mono abs sq" style="left:6px;top:38px;">ecx</div>
<div class="mono abs sq" style="left:62px;top:38px;color:#e61c3c;">2520002</div>
<div class="abs" style="left:0;top:70px;width:163px;height:1px;background:#e2decb;"></div>
<div class="mono abs sq" style="left:6px;top:55px;">edx</div>
<div class="mono abs sq" style="left:62px;top:55px;color:#e61c3c;">90909090</div>
<div class="abs" style="left:0;top:87px;width:163px;height:1px;background:#e2decb;"></div>
<div class="mono abs sq" style="left:6px;top:72px;">ebx</div>
<div class="mono abs sq" style="left:62px;top:72px;color:#e61c3c;">205ff0</div>
<div class="abs" style="left:0;top:104px;width:163px;height:1px;background:#e2decb;"></div>
<div class="mono abs sq" style="left:6px;top:89px;">esp</div>
<div class="mono abs sq" style="left:62px;top:89px;color:#e61c3c;">162bca0</div>
<div class="abs" style="left:0;top:121px;width:163px;height:1px;background:#e2decb;"></div>
<div class="mono abs sq" style="left:6px;top:106px;">ebp</div>
<div class="mono abs sq" style="left:62px;top:106px;color:#e61c3c;">162bcbc</div>
<div class="abs" style="left:0;top:138px;width:163px;height:1px;background:#e2decb;"></div>
<div class="mono abs sq" style="left:6px;top:123px;">esi</div>
<div class="mono abs sq" style="left:62px;top:123px;color:#e61c3c;">162bcd0</div>
<div class="abs" style="left:0;top:155px;width:163px;height:1px;background:#e2decb;"></div>
<div class="mono abs sq" style="left:6px;top:140px;">edi</div>
<div class="mono abs sq" style="left:62px;top:140px;color:#e61c3c;">0</div>
<div class="abs" style="left:0;top:172px;width:163px;height:1px;background:#e2decb;"></div>
<div class="mono abs sq" style="left:6px;top:157px;">eip</div>
<div class="mono abs sq" style="left:62px;top:157px;color:#e61c3c;">90909090</div>
<div class="abs" style="left:0;top:189px;width:163px;height:1px;background:#e2decb;"></div>
<div class="mono abs sq" style="left:6px;top:174px;">cf</div>
<div class="mono abs sq" style="left:62px;top:174px;">0</div>
<div class="abs" style="left:0;top:206px;width:163px;height:1px;background:#e2decb;"></div>
<div class="mono abs sq" style="left:6px;top:191px;">pf</div>
<div class="mono abs sq" style="left:62px;top:191px;">1</div>
<div class="abs" style="left:0;top:223px;width:163px;height:1px;background:#e2decb;"></div>
<div class="mono abs sq" style="left:6px;top:208px;">af</div>
<div class="mono abs sq" style="left:62px;top:208px;">0</div>
<div class="abs" style="left:0;top:240px;width:163px;height:1px;background:#e2decb;"></div>
<div class="mono abs sq" style="left:6px;top:225px;">zf</div>
<div class="mono abs sq" style="left:62px;top:225px;">1</div>
<div class="abs" style="left:0;top:257px;width:163px;height:1px;background:#e2decb;"></div>
<div class="mono abs sq" style="left:6px;top:242px;">sf</div>
<div class="mono abs sq" style="left:62px;top:242px;">0</div>
<div class="abs" style="left:0;top:274px;width:163px;height:1px;background:#e2decb;"></div>
<div class="mono abs sq" style="left:6px;top:259px;">tf</div>
<div class="mono abs sq" style="left:62px;top:259px;">0</div>
<div class="abs" style="left:0;top:291px;width:163px;height:1px;background:#e2decb;"></div>
<div class="mono abs sq" style="left:6px;top:276px;">df</div>
<div class="mono abs sq" style="left:62px;top:276px;">0</div>
<div class="abs" style="left:55px;top:20px;width:2px;height:270px;background:#e2decb;"></div>
</div>
<div class="sbt v" style="left:166px;top:502px;width:17px;height:285px;"></div><div class="sbb" style="left:166px;top:502px;width:17px;height:17px;"><svg width="17" height="17" viewBox="0 0 17 17" style="position:absolute;left:0px;top:0px"><path d="M4.5 10 L8.5 6 L12.5 10" fill="none" stroke="#4d6185" stroke-width="2.2"/></svg></div><div class="sbb" style="left:166px;top:770px;width:17px;height:17px;"><svg width="17" height="17" viewBox="0 0 17 17" style="position:absolute;left:0px;top:0px"><path d="M4.5 7 L8.5 11 L12.5 7" fill="none" stroke="#4d6185" stroke-width="2.2"/></svg></div><div class="sbth vth" style="left:166px;top:520px;width:17px;height:26px;"><div class="gripv" style="top:9px"></div></div>
<div class="sbt h" style="left:4px;top:787px;width:162px;height:17px;"></div><div class="sbb" style="left:4px;top:787px;width:17px;height:17px;"><svg width="17" height="17" viewBox="0 0 17 17" style="position:absolute;left:0px;top:0px"><path d="M10 4.5 L6 8.5 L10 12.5" fill="none" stroke="#4d6185" stroke-width="2.2"/></svg></div><div class="sbb" style="left:149px;top:787px;width:17px;height:17px;"><svg width="17" height="17" viewBox="0 0 17 17" style="position:absolute;left:0px;top:0px"><path d="M7 4.5 L11 8.5 L7 12.5" fill="none" stroke="#4d6185" stroke-width="2.2"/></svg></div><div class="sbth hth" style="left:22px;top:787px;width:114px;height:17px;"><div class="griph" style="left:52px"></div></div>
<div class="abs" style="left:166px;top:787px;width:17px;height:17px;background:#ece9d8;"><i style="position:absolute;left:12px;top:12px;width:2px;height:2px;background:#b8b4a2;box-shadow:1px 1px 0 #fff"></i><i style="position:absolute;left:8px;top:12px;width:2px;height:2px;background:#b8b4a2;box-shadow:1px 1px 0 #fff"></i><i style="position:absolute;left:4px;top:12px;width:2px;height:2px;background:#b8b4a2;box-shadow:1px 1px 0 #fff"></i><i style="position:absolute;left:12px;top:8px;width:2px;height:2px;background:#b8b4a2;box-shadow:1px 1px 0 #fff"></i><i style="position:absolute;left:8px;top:8px;width:2px;height:2px;background:#b8b4a2;box-shadow:1px 1px 0 #fff"></i><i style="position:absolute;left:12px;top:4px;width:2px;height:2px;background:#b8b4a2;box-shadow:1px 1px 0 #fff"></i></div>
<div class="abs" style="left:188px;top:453px;width:274px;height:353px;background:#ece9d8"></div>
<div class="ptitle ina" style="left:189px;top:454px;width:272px;"><b>Memory</b><div class="pclose" style="left:257px"><svg class="abs" style="left:0;top:0" width="11" height="11"><path d="M2.5 2.5 L8.5 8.5 M8.5 2.5 L2.5 8.5" stroke="#fff" stroke-width="1.8"/></svg></div><svg class="abs" style="left:237px;top:2px" width="15" height="12" viewBox="0 0 15 12" shape-rendering="crispEdges"><rect width="15" height="12" fill="#000"/><rect x="1" y="2" width="13" height="9" fill="#fff"/><rect width="15" height="2" fill="#00007b"/><rect x="2" y="3" width="1" height="2" fill="#808080"/><rect x="5" y="3" width="4" height="2" fill="#808080"/><rect x="10" y="3" width="3" height="2" fill="#808080"/><rect x="2" y="6" width="1" height="2" fill="#808080"/><rect x="5" y="6" width="4" height="2" fill="#808080"/><rect x="10" y="6" width="3" height="2" fill="#808080"/><rect x="2" y="9" width="1" height="2" fill="#808080"/><rect x="5" y="9" width="4" height="2" fill="#808080"/><rect x="10" y="9" width="3" height="2" fill="#808080"/></svg></div>
<div class="tbar" style="left:189px;top:472px;width:200px;height:21px;"></div>
<div class="tbar" style="left:189px;top:493px;width:272px;height:25px;"></div>
<div class="grip" style="left:193px;top:475px;height:15px"></div>
<div class="grip" style="left:193px;top:497px;height:18px"></div>
<div class="lbl" style="left:200px;top:476px;">Virtual:</div>
<div class="inp" style="left:239px;top:472px;width:148px;height:20px;"><span class="mono sq" style="color:#000;position:absolute;left:2px;top:2px;">0x`162bca4</span></div>
<div class="btn" style="left:396px;top:473px;width:64px;height:18px;line-height:16px;">Previous</div>
<div class="lbl" style="left:200px;top:500px;">Display format:</div>
<div class="inp" style="left:278px;top:494px;width:179px;height:24px;"><span class="mono sq" style="color:#000;position:absolute;left:3px;top:4px;">Pointer and Symbol</span></div>
<div class="cba" style="left:440px;top:496px;height:20px"><svg class="abs" style="left:2px;top:6px" width="9" height="7"><path d="M1 1.5 L4.5 5 L8 1.5" fill="none" stroke="#4d6185" stroke-width="2"/></svg></div>
<div class="btn" style="left:192px;top:521px;width:268px;height:18px;line-height:16px;">Next</div>
<div class="abs" style="left:190px;top:541px;width:270px;height:265px;background:#fff;border-left:1px solid #808075;border-top:1px solid #808075"></div>
<div class="dark" style="left:191px;top:542px;width:251px;height:245px;">
<div class="row mono" style="left:1px;top:2px;">0162bca4 3cf149d1 mshtml!CTreeNo</div>
<div class="row mono" style="left:1px;top:18px;">0162bca8 0162bfd3</div>
<div class="row mono" style="left:1px;top:34px;">0162bcac 00205ff0</div>
<div class="row mono" style="left:1px;top:50px;">0162bcb0 0162bfdf</div>
<div class="row mono" style="left:1px;top:66px;">0162bcb4 00000000</div>
<div class="row mono" style="left:1px;top:82px;">0162bcb8 0162bfdf</div>
<div class="row mono" style="left:1px;top:98px;">0162bcbc 0162bf68</div>
<div class="row mono" style="left:1px;top:114px;">0162bcc0 3cf14c3a mshtml!CTreeNo</div>
<div class="row mono" style="left:1px;top:130px;">0162bcc4 00205ff0</div>
<div class="row mono" style="left:1px;top:146px;">0162bcc8 0162bfd3</div>
<div class="row mono" style="left:1px;top:162px;">0162bccc 00205ff0</div>
<div class="row mono" style="left:1px;top:178px;">0162bcd0 00000000</div>
<div class="row mono" style="left:1px;top:194px;">0162bcd4 00000000</div>
<div class="row mono" style="left:1px;top:210px;">0162bcd8 00000000</div>
<div class="row mono" style="left:1px;top:226px;">0162bcdc 00000000</div>
</div>
<div class="sbt v" style="left:442px;top:542px;width:17px;height:245px;"></div><div class="sbb" style="left:442px;top:542px;width:17px;height:17px;"><svg width="17" height="17" viewBox="0 0 17 17" style="position:absolute;left:0px;top:0px"><path d="M4.5 10 L8.5 6 L12.5 10" fill="none" stroke="#4d6185" stroke-width="2.2"/></svg></div><div class="sbb" style="left:442px;top:770px;width:17px;height:17px;"><svg width="17" height="17" viewBox="0 0 17 17" style="position:absolute;left:0px;top:0px"><path d="M4.5 7 L8.5 11 L12.5 7" fill="none" stroke="#4d6185" stroke-width="2.2"/></svg></div><div class="sbth vth" style="left:442px;top:559px;width:17px;height:198px;"><div class="gripv" style="top:95px"></div></div>
<div class="sbt h" style="left:191px;top:787px;width:251px;height:17px;"></div><div class="sbb" style="left:191px;top:787px;width:17px;height:17px;"><svg width="17" height="17" viewBox="0 0 17 17" style="position:absolute;left:0px;top:0px"><path d="M10 4.5 L6 8.5 L10 12.5" fill="none" stroke="#4d6185" stroke-width="2.2"/></svg></div><div class="sbb" style="left:425px;top:787px;width:17px;height:17px;"><svg width="17" height="17" viewBox="0 0 17 17" style="position:absolute;left:0px;top:0px"><path d="M7 4.5 L11 8.5 L7 12.5" fill="none" stroke="#4d6185" stroke-width="2.2"/></svg></div><div class="sbth hth" style="left:208px;top:787px;width:118px;height:17px;"><div class="griph" style="left:54px"></div></div>
<div class="abs" style="left:442px;top:787px;width:17px;height:17px;background:#ece9d8;"><i style="position:absolute;left:12px;top:12px;width:2px;height:2px;background:#b8b4a2;box-shadow:1px 1px 0 #fff"></i><i style="position:absolute;left:8px;top:12px;width:2px;height:2px;background:#b8b4a2;box-shadow:1px 1px 0 #fff"></i><i style="position:absolute;left:4px;top:12px;width:2px;height:2px;background:#b8b4a2;box-shadow:1px 1px 0 #fff"></i><i style="position:absolute;left:12px;top:8px;width:2px;height:2px;background:#b8b4a2;box-shadow:1px 1px 0 #fff"></i><i style="position:absolute;left:8px;top:8px;width:2px;height:2px;background:#b8b4a2;box-shadow:1px 1px 0 #fff"></i><i style="position:absolute;left:12px;top:4px;width:2px;height:2px;background:#b8b4a2;box-shadow:1px 1px 0 #fff"></i></div>
<div class="abs" style="left:464px;top:453px;width:796px;height:353px;background:#ece9d8"></div>
<div class="ptitle ina" style="left:465px;top:454px;width:794px;"><b>Command</b><div class="pclose" style="left:779px"><svg class="abs" style="left:0;top:0" width="11" height="11"><path d="M2.5 2.5 L8.5 8.5 M8.5 2.5 L2.5 8.5" stroke="#fff" stroke-width="1.8"/></svg></div><svg class="abs" style="left:759px;top:2px" width="15" height="12" viewBox="0 0 15 12" shape-rendering="crispEdges"><rect width="15" height="12" fill="#000"/><rect x="1" y="2" width="13" height="9" fill="#fff"/><rect width="15" height="2" fill="#00007b"/><path d="M3 4.5 L6 6.5 L3 8.5" fill="none" stroke="#000" stroke-width="1" shape-rendering="auto"/><rect x="6" y="9" width="5" height="1" fill="#000"/></svg></div>
<div class="abs" style="left:465px;top:472px;width:794px;height:313px;background:#fff;border-left:2px solid #a09c8c;border-top:2px solid #808075"></div>
<div class="dark" style="left:467px;top:474px;width:773px;height:292px;">
<div class="hl" style="left:81px;top:145px;width:88px;background:#316ac5"></div>
<div class="row mono" style="left:1px;top:2px;">0:019&gt; g</div>
<div class="row mono" style="left:1px;top:18px;">(114.1a8): Access violation - code c0000005 (first chance)</div>
<div class="row mono" style="left:1px;top:34px;">First chance exceptions are reported before any exception handling.</div>
<div class="row mono" style="left:1px;top:50px;">This exception may be expected and handled.</div>
<div class="row mono" style="left:1px;top:66px;">eax=0c0c0c0c ebx=00205ff0 ecx=02520002 edx=90909090 esi=0162bcd0 edi=00000000</div>
<div class="row mono" style="left:1px;top:82px;">eip=90909090 esp=0162bca0 ebp=0162bcbc iopl=0         nv up ei pl zr na pe nc</div>
<div class="row mono" style="left:1px;top:98px;">cs=001b  ss=0023  ds=0023  es=0023  fs=003b  gs=0000             efl=00010246</div>
<div class="row mono" style="left:1px;top:114px;">90909090 ??              ???</div>
<div class="row mono" style="left:1px;top:130px;">0:008&gt; d 0c0c0c0c+70</div>
<div class="row mono" style="left:1px;top:146px;">0c0c0c7c  <span style="color:#fff">90 90 90 90</span> 90 90 90 90-90 90 90 90 90 90 90 90  <b>................</b></div>
<div class="row mono" style="left:1px;top:162px;">0c0c0c8c  90 90 90 90 90 90 90 90-90 90 90 90 90 90 90 90  <b>................</b></div>
<div class="row mono" style="left:1px;top:178px;">0c0c0c9c  90 90 90 90 90 90 90 90-90 90 90 90 90 90 90 90  <b>................</b></div>
<div class="row mono" style="left:1px;top:194px;">0c0c0cac  90 90 90 90 90 90 90 90-90 90 90 90 90 90 90 90  <b>................</b></div>
<div class="row mono" style="left:1px;top:210px;">0c0c0cbc  90 90 90 90 90 90 90 90-90 90 90 90 90 90 90 90  <b>................</b></div>
<div class="row mono" style="left:1px;top:226px;">0c0c0ccc  90 90 90 90 90 90 90 90-90 90 90 90 90 90 90 90  <b>................</b></div>
<div class="row mono" style="left:1px;top:242px;">0c0c0cdc  90 90 90 90 90 90 90 90-90 90 90 90 90 90 90 90  <b>................</b></div>
<div class="row mono" style="left:1px;top:258px;">0c0c0cec  90 90 90 90 90 90 90 90-90 90 90 90 90 90 90 90  <b>................</b></div>
</div>
<div class="sbt v" style="left:1240px;top:474px;width:17px;height:292px;"></div><div class="sbb" style="left:1240px;top:474px;width:17px;height:17px;"><svg width="17" height="17" viewBox="0 0 17 17" style="position:absolute;left:0px;top:0px"><path d="M4.5 10 L8.5 6 L12.5 10" fill="none" stroke="#4d6185" stroke-width="2.2"/></svg></div><div class="sbb" style="left:1240px;top:749px;width:17px;height:17px;"><svg width="17" height="17" viewBox="0 0 17 17" style="position:absolute;left:0px;top:0px"><path d="M4.5 7 L8.5 11 L12.5 7" fill="none" stroke="#4d6185" stroke-width="2.2"/></svg></div><div class="sbth vth" style="left:1240px;top:704px;width:17px;height:45px;"><div class="gripv" style="top:18px"></div></div>
<div class="sbt h" style="left:467px;top:766px;width:773px;height:17px;"></div><div class="sbb" style="left:467px;top:766px;width:17px;height:17px;"><svg width="17" height="17" viewBox="0 0 17 17" style="position:absolute;left:0px;top:0px"><path d="M10 4.5 L6 8.5 L10 12.5" fill="none" stroke="#4d6185" stroke-width="2.2"/></svg></div><div class="sbb" style="left:1223px;top:766px;width:17px;height:17px;"><svg width="17" height="17" viewBox="0 0 17 17" style="position:absolute;left:0px;top:0px"><path d="M7 4.5 L11 8.5 L7 12.5" fill="none" stroke="#4d6185" stroke-width="2.2"/></svg></div><div class="sbth hth" style="left:485px;top:766px;width:499px;height:17px;"><div class="griph" style="left:244px"></div></div>
<div class="abs" style="left:1240px;top:766px;width:17px;height:17px;background:#ece9d8;"></div>
<div class="abs" style="left:466px;top:788px;width:54px;height:17px;border:1px solid #aca899;border-right-color:#fff;border-bottom-color:#fff;background:#ece9d8;"><span class="mono sq abs" style="left:1px;top:1px;color:#000;">0:008&gt;</span></div>
<div class="abs" style="left:522px;top:789px;width:718px;height:16px;background:#1a1a1a;"></div>
<div class="sbb sm" style="left:1241px;top:789px;width:16px;height:8px;"><i class="tri up"></i></div>
<div class="sbb sm" style="left:1241px;top:797px;width:16px;height:8px;"><i class="tri dn"></i></div>
<div class="abs" style="left:0px;top:812px;width:1265px;height:23px;background:#ece9d8;border-top:1px solid #f6f4ec;"></div>
<div class="abs" style="left:850px;top:819px;font-size:11px;white-space:nowrap;">Ln 1, Col 1</div>
<div class="abs" style="left:911px;top:819px;font-size:11px;white-space:nowrap;">Sys 0:&lt;Local&gt;</div>
<div class="abs" style="left:991px;top:819px;font-size:11px;white-space:nowrap;">Proc 000:114</div>
<div class="abs" style="left:1065px;top:819px;font-size:11px;white-space:nowrap;">Thrd 008:1a8</div>
<div class="abs" style="left:1140px;top:819px;font-size:11px;white-space:nowrap;color:#aca899;transform:scaleX(0.9);transform-origin:0 0;">ASM</div>
<div class="abs" style="left:1171px;top:819px;font-size:11px;white-space:nowrap;color:#aca899;transform:scaleX(0.9);transform-origin:0 0;">OVR</div>
<div class="abs" style="left:1202px;top:819px;font-size:11px;white-space:nowrap;color:#aca899;transform:scaleX(0.9);transform-origin:0 0;">CAPS</div>
<div class="abs" style="left:1238px;top:819px;font-size:11px;white-space:nowrap;transform:scaleX(0.9);transform-origin:0 0;">NUM</div>
<div class="abs" style="left:844px;top:816px;width:2px;height:17px;border-left:1px solid #c5c2b2;border-right:1px solid #fff;"></div>
<div class="abs" style="left:904px;top:816px;width:2px;height:17px;border-left:1px solid #c5c2b2;border-right:1px solid #fff;"></div>
<div class="abs" style="left:984px;top:816px;width:2px;height:17px;border-left:1px solid #c5c2b2;border-right:1px solid #fff;"></div>
<div class="abs" style="left:1058px;top:816px;width:2px;height:17px;border-left:1px solid #c5c2b2;border-right:1px solid #fff;"></div>
<div class="abs" style="left:1134px;top:816px;width:2px;height:17px;border-left:1px solid #c5c2b2;border-right:1px solid #fff;"></div>
<div class="abs" style="left:1165px;top:816px;width:2px;height:17px;border-left:1px solid #c5c2b2;border-right:1px solid #fff;"></div>
<div class="abs" style="left:1196px;top:816px;width:2px;height:17px;border-left:1px solid #c5c2b2;border-right:1px solid #fff;"></div>
<div class="abs" style="left:1232px;top:816px;width:2px;height:17px;border-left:1px solid #c5c2b2;border-right:1px solid #fff;"></div>
</div></div>
</body></html>
